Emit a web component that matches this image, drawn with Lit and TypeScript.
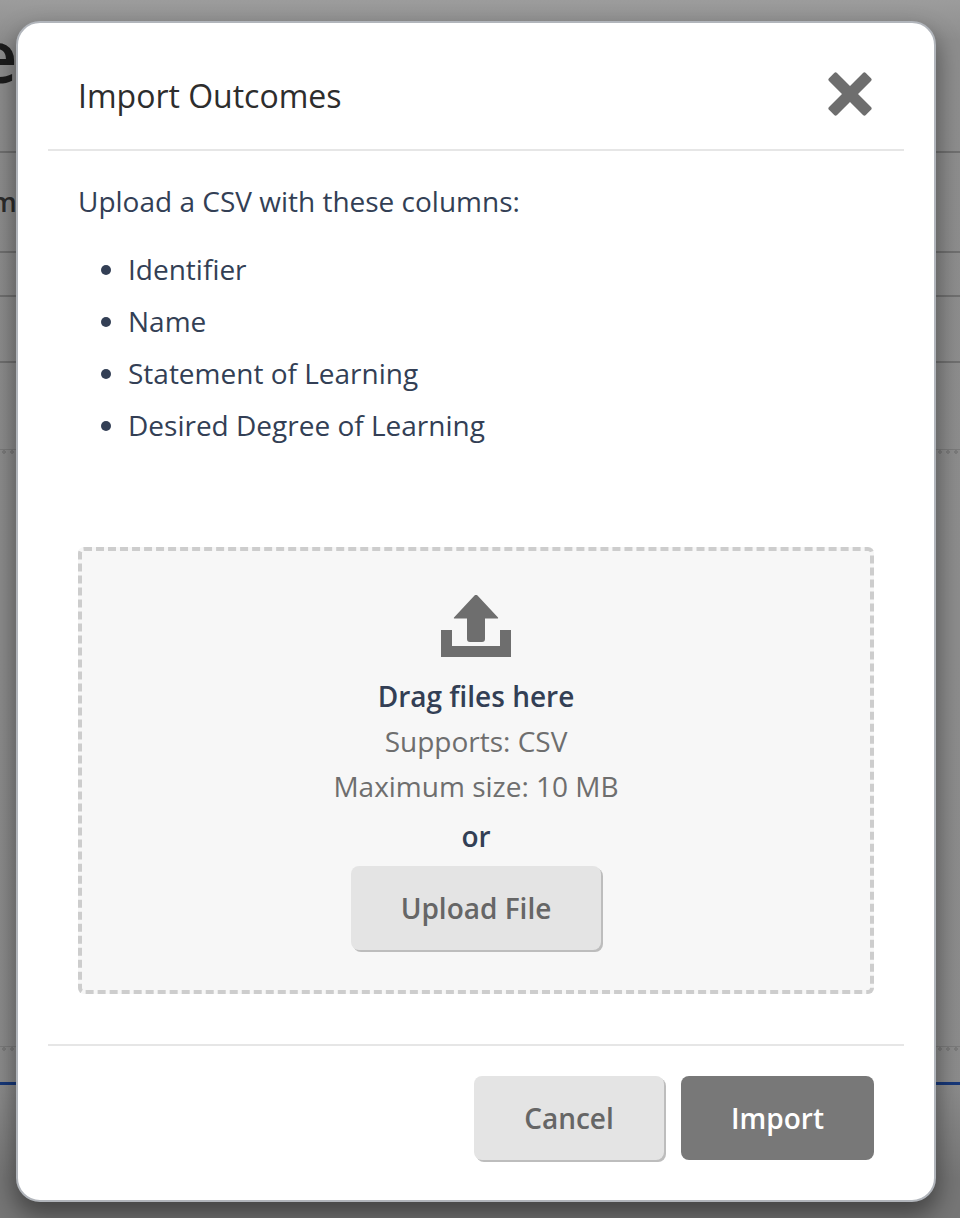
import { LitElement, html, css } from "lit";
import { customElement } from "lit/decorators.js";

@customElement("app-root")
export class AppRoot extends LitElement {
  static styles = css`
    :host { display: block; position: relative; width: 960px; height: 1218px; overflow: hidden; background: #8f8f8f; font-family: "Open Sans", sans-serif; color: #333f55; }
    * { box-sizing: border-box; }
    .page { height: 1218px; overflow: hidden; background: linear-gradient(#9c9c9c 0, #8e8e8e 40px, #8c8c8c 100%); color: #1c1c1c; }
    .heading { height: 153px; padding: 10px 0 0 0; margin-left: -24px; font-size: 72px; line-height: 90px; font-weight: 600; white-space: nowrap; border-bottom: 2px solid #707070; }
    .row { border-bottom: 2px solid #707070; }
    .r1 { height: 100px; padding: 31px 0 0 0; margin-left: -9px; font-size: 27px; line-height: 36px; font-weight: 600; color: #2c2c2c; }
    .r2 { height: 44px; }
    .r3 { height: 66px; }
    .dots, .gap { background:
      radial-gradient(circle 2px, #7b7b7b 90%, transparent) 0 bottom / 8px 4px repeat-x,
      linear-gradient(#7c7c7c, #7c7c7c) 0 calc(100% - 4px) / 100% 1px no-repeat; }
    .dots { height: 91px; }
    .gap { height: 597px; }
    .blue { height: 34px; border-bottom: 3px solid #17387a; }
    .bottom { height: 133px; background: linear-gradient(#8c8c8c, #767676 70%); }
    .modal { position: absolute; left: 16px; top: 21px; width: 920px; height: 1181px; background: #fff; border: 2px solid #b1b5bb; border-radius: 24px; padding: 0 30px; box-shadow: 0 12px 24px 2px rgba(0,0,0,.42); display: flex; flex-direction: column; }
    header { height: 128px; flex: none; border-bottom: 2px solid #e6e6e6; display: flex; align-items: flex-start; justify-content: space-between; padding: 51px 30px 0; }
    h1 { margin: 0; font-size: 32px; font-weight: 400; color: #2d2d2d; line-height: 44px; }
    .close { display: block; margin: -2px 2px 0 0; }
    .body { flex: 1; padding: 30px 30px 0; display: flex; flex-direction: column; }
    p { margin: 0; font-size: 28px; line-height: 40px; }
    ul { margin: 28px 0 0; padding: 0 0 0 50px; font-size: 28px; line-height: 40px; }
    li { margin-bottom: 12px; }
    .drop { margin-top: 90px; height: 447px; background: #f7f7f7; border: 4px dashed #cdcdcd; border-radius: 6px; display: flex; flex-direction: column; align-items: center; padding-top: 44px; color: #6e6e6e; }
    .icon { display: block; }
    .drag { margin-top: 19px; font-size: 28px; line-height: 40px; font-weight: 600; color: #333f55; }
    .sub { margin-top: 5px; font-size: 28px; line-height: 40px; }
    .or { margin-top: 10px; font-size: 28px; line-height: 40px; font-weight: 600; color: #333f55; }
    button { font: inherit; font-weight: 600; font-size: 28px; line-height: 36px; border: 0; border-radius: 8px; height: 84px; padding: 0; }
    .secondary { background: #e4e4e4; color: #666; box-shadow: 2px 2px 0 #bdbdbd; }
    .primary { background: #787878; color: #fff; }
    .upload { margin-top: 10px; width: 250px; flex: none; }
    footer { height: 156px; flex: none; border-top: 2px solid #e6e6e6; display: flex; justify-content: flex-end; gap: 17px; padding: 30px 30px 0 0; }
    .cancel { width: 190px; }
    .import { width: 193px; }
  `;

  render() {
    return html`
      <div class="page" aria-hidden="true">
        <div class="heading">e</div>
        <div class="row r1">m</div>
        <div class="row r2"></div>
        <div class="row r3"></div>
        <div class="dots"></div>
        <div class="gap"></div>
        <div class="blue"></div>
        <div class="bottom"></div>
      </div>
      <div class="modal">
        <header>
          <h1>Import Outcomes</h1>
          <svg class="close" width="44" height="44" viewBox="0 0 44 44"><path fill="#6e6e6e" d="M9 1 22 14 35 1a2 2 0 0 1 2.800 0l5.200 5.200a2 2 0 0 1 0 2.800L30 22l13 13a2 2 0 0 1 0 2.800L37.800 43a2 2 0 0 1-2.800 0L22 30 9 43a2 2 0 0 1-2.800 0L1 37.800A2 2 0 0 1 1 35L14 22 1 9a2 2 0 0 1 0-2.800L6.200 1A2 2 0 0 1 9 1Z"/></svg>
        </header>
        <div class="body">
          <p>Upload a CSV with these columns:</p>
          <ul>
            <li>Identifier</li>
            <li>Name</li>
            <li>Statement of Learning</li>
            <li>Desired Degree of Learning</li>
          </ul>
          <div class="drop">
            <svg class="icon" width="70" height="62" viewBox="0 0 70 62"><path fill="#6e6e6e" d="M0 35H11V51H59V35H70V62H0ZM33.500.6a2 2 0 0 1 3 0L57 22.500a.6.6 0 0 1-.5 1H44V44a3 3 0 0 1-3 3H29a3 3 0 0 1-3-3V23.500H13.500a.6.6 0 0 1-.5-1Z"/></svg>
            <div class="drag">Drag files here</div>
            <div class="sub">Supports: CSV</div>
            <div class="sub">Maximum size: 10 MB</div>
            <div class="or">or</div>
            <button class="secondary upload">Upload File</button>
          </div>
        </div>
        <footer>
          <button class="secondary cancel">Cancel</button>
          <button class="primary import">Import</button>
        </footer>
      </div>
    `;
  }
}
